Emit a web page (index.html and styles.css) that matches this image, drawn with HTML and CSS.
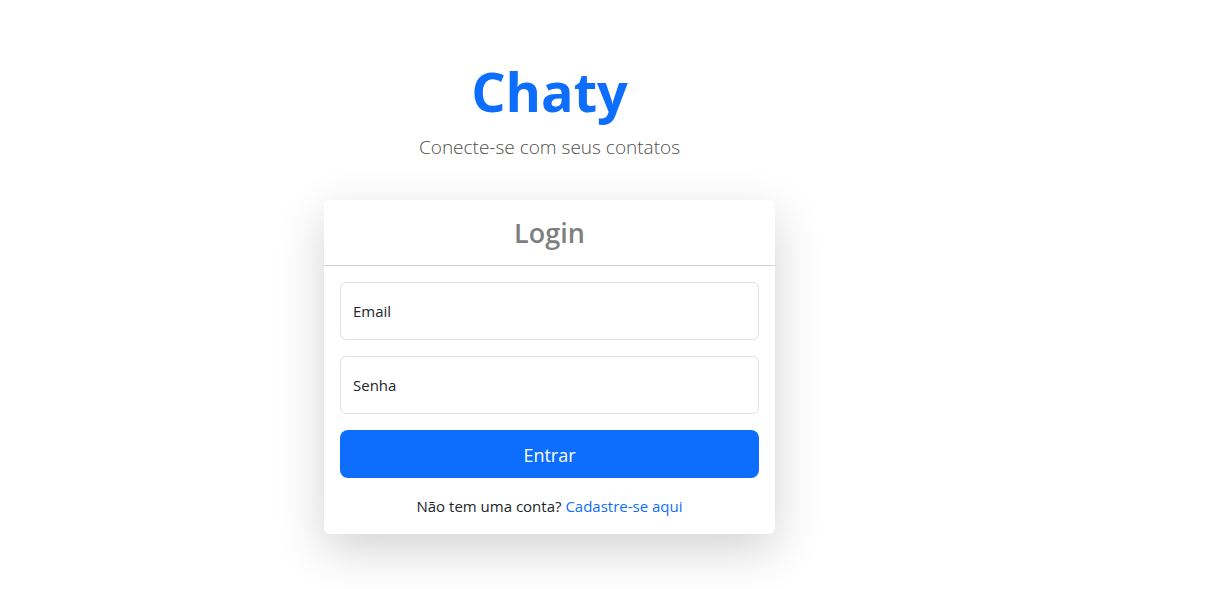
FILE: index.html
```html
<!DOCTYPE html>
<html lang="pt-BR">
<head>
<meta charset="utf-8">
<meta name="viewport" content="width=device-width, initial-scale=1">
<title>Chaty</title>
<link rel="stylesheet" href="styles.css">
</head>
<body>
<main class="page">
  <header class="brand">
    <h1 class="brand-name">Chaty</h1>
    <p class="brand-lead">Conecte-se com seus contatos</p>
  </header>
  <section class="card">
    <h2 class="card-header">Login</h2>
    <form class="card-body">
      <div class="field">
        <input class="field-input" type="email" id="email">
        <label class="field-label" for="email">Email</label>
      </div>
      <div class="field">
        <input class="field-input" type="password" id="senha">
        <label class="field-label" for="senha">Senha</label>
      </div>
      <button class="submit" type="submit">Entrar</button>
      <p class="signup">Não tem uma conta? <a class="signup-link" href="#">Cadastre-se aqui</a></p>
    </form>
  </section>
</main>
</body>
</html>
```
FILE: styles.css
```css
* {
  box-sizing: border-box;
}

body {
  margin: 0;
  background: #fff;
  color: #212529;
  font-family: "Segoe UI", "Open Sans", "Noto Sans", sans-serif;
  font-size: 15px;
  line-height: 24px;
}

.page {
  display: flex;
  flex-direction: column;
  align-items: center;
  gap: 38px;
  max-width: 1099px;
  padding: 56px 16px;
}

.brand {
  text-align: center;
}

.brand-name {
  margin: 0 0 6px;
  color: #0d6efd;
  font-size: 54px;
  font-weight: 700;
  line-height: 70px;
}

.brand-lead {
  margin: 0;
  color: #4f4f4f;
  font-size: 19px;
  font-weight: 300;
  line-height: 30px;
}

.card {
  width: 100%;
  max-width: 451px;
  border-radius: 6px;
  background: #fff;
  box-shadow: 0 16px 48px rgba(0, 0, 0, 0.176);
}

.card-header {
  margin: 0;
  padding: 16px;
  border-bottom: 1px solid #d2d2d2;
  color: #7f7f7f;
  font-size: 27px;
  font-weight: 600;
  line-height: 33px;
  text-align: center;
}

.card-body {
  display: flex;
  flex-direction: column;
  gap: 16px;
  padding: 16px;
}

.field {
  display: grid;
}

.field-input,
.field-label {
  grid-area: 1 / 1;
}

.field-input {
  width: 100%;
  height: 58px;
  padding: 16px 12px;
  border: 1px solid #dee2e6;
  border-radius: 6px;
  background: #fff;
  color: inherit;
  font: inherit;
}

.field-label {
  align-self: center;
  padding: 0 13px;
  pointer-events: none;
}

.field-input:focus + .field-label {
  visibility: hidden;
}

.submit {
  height: 48px;
  padding: 2px 16px 0;
  border: 0;
  border-radius: 8px;
  background: #0d6efd;
  color: #fff;
  font-family: inherit;
  font-size: 18px;
  line-height: 30px;
  cursor: pointer;
}

.signup {
  margin: 0;
  text-align: center;
}

.signup-link {
  color: #0d6efd;
  text-decoration: none;
}
```
